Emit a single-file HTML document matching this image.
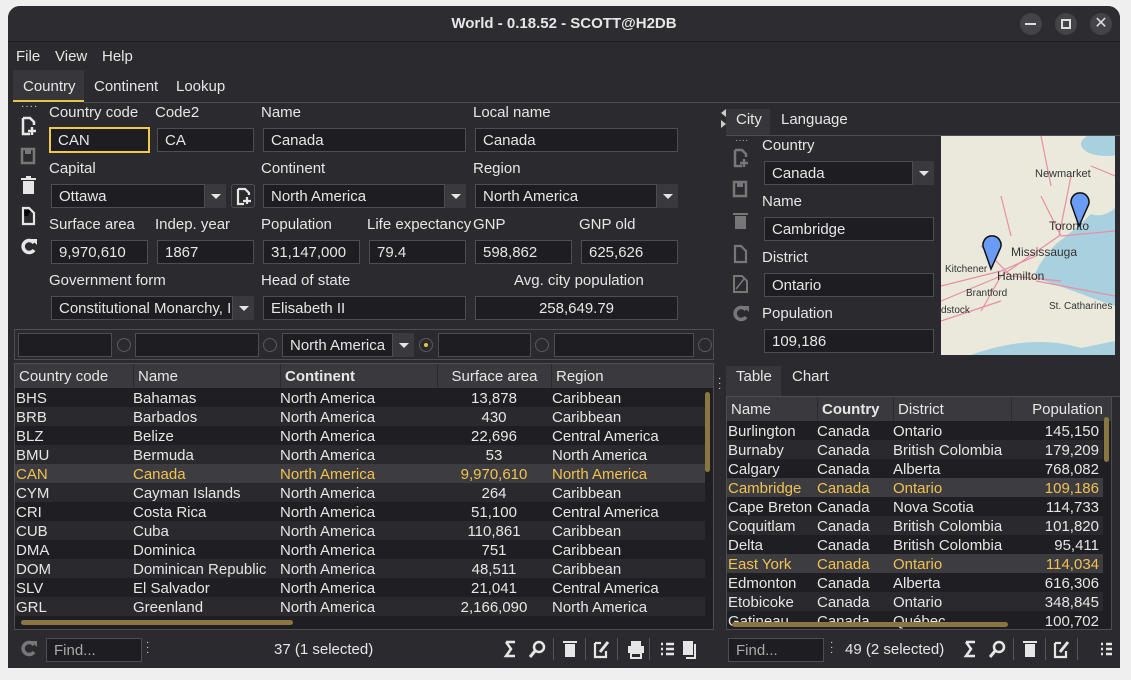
<!DOCTYPE html><html><head><style>
*{box-sizing:border-box;margin:0;padding:0}
body{width:1131px;height:680px;background:#efefef;font-family:"Liberation Sans",sans-serif;font-size:15px;color:#e6e6e6;position:relative;overflow:hidden}
.win{position:absolute;left:8px;top:6px;width:1112px;height:662px;background:#2b2a2e;border-radius:12px 12px 0 0;overflow:hidden}
.a{position:absolute;white-space:nowrap}
.inp{position:absolute;height:24px;background:#1e1d21;border:1px solid #4e4d52;padding:3px 7px;white-space:nowrap;overflow:hidden}
.dd{position:absolute;width:22px;height:24px;background:#3a393d;border-left:1px solid #4e4d52}
.dd:after{content:"";position:absolute;left:6px;top:10px;border:5px solid transparent;border-top:5px solid #e6e6e6}
.lbl{position:absolute;white-space:nowrap}
.row{position:absolute;height:19px;white-space:nowrap}
.row span{position:absolute;top:2px}
.rad{position:absolute;width:14px;height:14px;border:1px solid #5a595e;border-radius:50%}
.ico{position:absolute;color:#e6e6e6;font-size:15px}
</style></head><body>
<div class="win">
<div class="a" style="left:0;top:0;width:1112px;height:36px;background:#2d2c30;border-bottom:1px solid #1c1b1e"></div>
<div class="a" style="left:0;width:1112px;top:9px;text-align:center;font-weight:bold;font-size:15px">World - 0.18.52 - SCOTT@H2DB</div>
<div class="a" style="left:1012px;top:7px;width:22px;height:22px;border-radius:50%;background:#444347"></div>
<div class="a" style="left:1017px;top:17px;width:11px;height:2px;background:#ddd"></div>
<div class="a" style="left:1047px;top:7px;width:22px;height:22px;border-radius:50%;background:#444347"></div>
<div class="a" style="left:1053px;top:13px;width:10px;height:10px;border:2px solid #ddd"></div>
<div class="a" style="left:1082px;top:7px;width:22px;height:22px;border-radius:50%;background:#444347;text-align:center;line-height:22px;font-size:16px;color:#ddd">✕</div>
<div class="a" style="left:8px;top:42px">File</div>
<div class="a" style="left:47px;top:42px">View</div>
<div class="a" style="left:94px;top:42px">Help</div>
<div class="a" style="left:5px;top:64px;width:71px;height:32px;background:#37363a;border-bottom:2px solid #e8c34a"></div>
<div class="a" style="left:15px;top:72px">Country</div>
<div class="a" style="left:86px;top:72px">Continent</div>
<div class="a" style="left:168px;top:72px">Lookup</div>
<div class="a" style="left:76px;top:96px;width:1036px;height:1px;background:#4e4d52"></div>
<div class="a" style="left:13px;top:95px;font-size:10px;letter-spacing:1px">····</div>
<svg class="a" style="left:12px;top:110px" width="18" height="100" viewBox="0 0 18 100">
<path d="M3 2 H10 L14 6 V9 M3 2 V18 H10" stroke="#e6e6e6" stroke-width="2.5" fill="none"/><path d="M12 11 V19 M8 15 H16" stroke="#e6e6e6" stroke-width="2.5"/>
<path d="M2 33 H14 V47 H2 Z" fill="none" stroke="#777" stroke-width="2.5"/><rect x="5" y="33" width="6" height="5" fill="#777"/>
<rect x="3" y="65" width="11" height="13" fill="#e6e6e6"/><rect x="1" y="62" width="15" height="2" fill="#e6e6e6"/><rect x="6" y="60" width="5" height="2" fill="#e6e6e6"/>
<path d="M3 108 V94 H10 L13 91" stroke="none"/>
</svg>
<svg class="a" style="left:12px;top:200px" width="18" height="60"><path d="M3 2 H9 L14 7 V18 H3 Z" fill="none" stroke="#e6e6e6" stroke-width="2.2"/><path d="M14 37 A6 6 0 1 0 14 44" stroke="#e6e6e6" stroke-width="3.5" fill="none"/><path d="M11 33 L17 33 L17 39Z" fill="#e6e6e6"/></svg>
<div class="lbl" style="left:41px;top:98px">Country code</div>
<div class="lbl" style="left:147px;top:98px">Code2</div>
<div class="lbl" style="left:253px;top:98px">Name</div>
<div class="lbl" style="left:465px;top:98px">Local name</div>
<div class="inp" style="left:41px;top:121px;width:101px;height:26px;border:2px solid #f2c94c">CAN</div>
<div class="inp" style="left:149px;top:122px;width:97px">CA</div>
<div class="inp" style="left:255px;top:122px;width:203px">Canada</div>
<div class="inp" style="left:467px;top:122px;width:203px">Canada</div>
<div class="lbl" style="left:41px;top:154px">Capital</div>
<div class="lbl" style="left:253px;top:154px">Continent</div>
<div class="lbl" style="left:465px;top:154px">Region</div>
<div class="inp" style="left:43px;top:178px;width:175px">Ottawa</div><div class="dd" style="left:196px;top:178px"></div>
<div class="a" style="left:223px;top:178px;width:24px;height:24px;border:1px solid #4e4d52;border-radius:3px"><svg width="22" height="22"><path d="M6 4 H13 L17 8 V10 M6 4 V19 H12" stroke="#e6e6e6" stroke-width="2.2" fill="none"/><path d="M15 12 V19 M11 16 H19" stroke="#e6e6e6" stroke-width="2.2"/></svg></div>
<div class="inp" style="left:255px;top:178px;width:203px">North America</div><div class="dd" style="left:436px;top:178px"></div>
<div class="inp" style="left:467px;top:178px;width:203px">North America</div><div class="dd" style="left:648px;top:178px"></div>
<div class="lbl" style="left:41px;top:210px">Surface area</div>
<div class="lbl" style="left:147px;top:210px">Indep. year</div>
<div class="lbl" style="left:253px;top:210px">Population</div>
<div class="lbl" style="left:359px;top:210px">Life expectancy</div>
<div class="lbl" style="left:465px;top:210px">GNP</div>
<div class="lbl" style="left:571px;top:210px">GNP old</div>
<div class="inp" style="left:43px;top:234px;width:97px">9,970,610</div>
<div class="inp" style="left:149px;top:234px;width:97px">1867</div>
<div class="inp" style="left:255px;top:234px;width:97px">31,147,000</div>
<div class="inp" style="left:361px;top:234px;width:97px">79.4</div>
<div class="inp" style="left:467px;top:234px;width:97px">598,862</div>
<div class="inp" style="left:573px;top:234px;width:97px">625,626</div>
<div class="lbl" style="left:41px;top:266px">Government form</div>
<div class="lbl" style="left:253px;top:266px">Head of state</div>
<div class="lbl" style="left:506px;top:266px">Avg. city population</div>
<div class="inp" style="left:43px;top:290px;width:203px">Constitutional Monarchy, I</div><div class="dd" style="left:224px;top:290px"></div>
<div class="inp" style="left:255px;top:290px;width:203px">Elisabeth II</div>
<div class="inp" style="left:467px;top:290px;width:203px;text-align:center">258,649.79</div>
<div class="a" style="left:6px;top:323px;width:700px;height:31px;border:1px solid #4e4d52"></div>
<div class="inp" style="left:10px;top:327px;width:94px"></div><div class="rad" style="left:109px;top:332px"></div>
<div class="inp" style="left:127px;top:327px;width:124px"></div><div class="rad" style="left:255px;top:332px"></div>
<div class="inp" style="left:274px;top:327px;width:132px">North America</div><div class="dd" style="left:384px;top:327px"></div>
<div class="rad" style="left:411px;top:332px"></div><div class="a" style="left:416px;top:337px;width:4px;height:4px;border-radius:50%;background:#e8c34a"></div>
<div class="inp" style="left:430px;top:327px;width:93px"></div><div class="rad" style="left:527px;top:332px"></div>
<div class="inp" style="left:546px;top:327px;width:140px"></div><div class="rad" style="left:690px;top:332px"></div>
<div class="a" style="left:6px;top:357px;width:700px;height:267px;border:1px solid #4e4d52;overflow:hidden;background:#1f1e22">
 <div class="a" style="left:0;top:0;width:700px;height:24px;background:#3a393d"></div>
 <div class="a" style="left:4px;top:4px">Country code</div>
 <div class="a" style="left:118px;top:0;height:24px;border-left:1px solid #2b2a2e;padding:4px 4px">Name</div>
 <div class="a" style="left:265px;top:0;height:24px;border-left:1px solid #2b2a2e;padding:4px 4px;font-weight:bold">Continent</div>
 <div class="a" style="left:422px;top:0;width:114px;height:24px;border-left:1px solid #2b2a2e;padding:4px 0;text-align:center">Surface area</div>
 <div class="a" style="left:536px;top:0;height:24px;border-left:1px solid #2b2a2e;padding:4px 4px">Region</div>
 <div id="lt"></div>
 <div class="a" style="left:6px;top:256px;width:272px;height:5px;border-radius:3px;background:#8a7640"></div>
 <div class="a" style="left:690px;top:28px;width:5px;height:80px;border-radius:3px;background:#8a7640"></div>
</div>
<div class="a" style="left:709px;top:103px;border:4px solid transparent;border-right:5px solid #ccc"></div>
<div class="a" style="left:713px;top:114px;border:4px solid transparent;border-left:5px solid #ccc"></div>
<div class="a" style="left:718px;top:103px;width:44px;height:26px;background:#37363a"></div>
<div class="a" style="left:728px;top:105px">City</div>
<div class="a" style="left:773px;top:105px">Language</div>
<div class="a" style="left:718px;top:129px;width:394px;height:1px;background:#4e4d52"></div>
<div class="a" style="left:727px;top:129px;font-size:10px;color:#aaa">····</div>
<svg class="a" style="left:724px;top:140px" width="18" height="180" viewBox="0 0 18 180">
<path d="M3 4 H10 L14 8 V11 M3 4 V20 H10" stroke="#777" stroke-width="2.5" fill="none"/><path d="M12 13 V21 M8 17 H16" stroke="#777" stroke-width="2.5"/>
<path d="M2 36 H14 V50 H2 Z" fill="none" stroke="#777" stroke-width="2.5"/><rect x="5" y="36" width="6" height="5" fill="#777"/>
<rect x="3" y="70" width="11" height="13" fill="#777"/><rect x="1" y="67" width="15" height="2" fill="#777"/>
<path d="M3 100 H9 L14 105 V116 H3 Z" fill="none" stroke="#777" stroke-width="2.2"/>
<path d="M2 130 H10 L15 135 V146 H2 Z" fill="none" stroke="#777" stroke-width="2"/><path d="M4 143 L12 133" stroke="#777" stroke-width="1.5"/>
<path d="M14 164 A6 6 0 1 0 14 171" stroke="#777" stroke-width="3.5" fill="none"/><path d="M11 160 L17 160 L17 166Z" fill="#777"/>
</svg>
<div class="lbl" style="left:754px;top:131px">Country</div>
<div class="inp" style="left:756px;top:155px;width:170px">Canada</div><div class="dd" style="left:904px;top:155px"></div>
<div class="lbl" style="left:754px;top:187px">Name</div>
<div class="inp" style="left:756px;top:211px;width:170px">Cambridge</div>
<div class="lbl" style="left:754px;top:243px">District</div>
<div class="inp" style="left:756px;top:267px;width:170px">Ontario</div>
<div class="lbl" style="left:754px;top:299px">Population</div>
<div class="inp" style="left:756px;top:323px;width:170px">109,186</div>
<svg class="a" style="left:933px;top:130px" width="174" height="219" viewBox="0 0 174 219">
<rect width="174" height="219" fill="#ebe8dc"/>
<ellipse cx="165" cy="8" rx="25" ry="12" fill="#a9d0de"/>
<path d="M150 78 C160 82 170 76 174 72 L174 170 C150 162 120 150 95 142 C92 136 102 122 115 108 C128 98 140 88 150 78Z" fill="#a9d0de"/>
<path d="M30 219 C60 208 100 200 140 212 L174 205 L174 219Z" fill="#a9d0de"/>
<path d="M130 40 L118 100 L60 140 L0 165 M100 60 L120 100 L174 95 M40 110 L70 140 L120 145 M0 150 L60 135 L95 120 M60 140 L40 175 M0 185 L60 165 M100 0 L110 50 M60 60 L70 100 M95 145 L174 160 M150 30 L174 40" stroke="#e88ea5" stroke-width="1.2" fill="none"/>
<text x="94" y="41" font-size="11" fill="#333" font-family="Liberation Sans">Newmarket</text>
<text x="108" y="94" font-size="12" fill="#333" font-family="Liberation Sans">Toronto</text>
<text x="70" y="120" font-size="12" fill="#333" font-family="Liberation Sans">Mississauga</text>
<text x="56" y="144" font-size="12" fill="#333" font-family="Liberation Sans">Hamilton</text>
<text x="4" y="136" font-size="10" fill="#333" font-family="Liberation Sans">Kitchener</text>
<text x="25" y="160" font-size="10" fill="#333" font-family="Liberation Sans">Brantford</text>
<text x="0" y="177" font-size="10" fill="#333" font-family="Liberation Sans">dstock</text>
<text x="108" y="173" font-size="10" fill="#333" font-family="Liberation Sans">St. Catharines</text>
<path d="M138 90 L131 70 A9 9 0 1 1 147 70 Z" fill="#6b9cf5" stroke="#111" stroke-width="1.5"/>
<path d="M50 133 L43 113 A9 9 0 1 1 59 113 Z" fill="#6b9cf5" stroke="#111" stroke-width="1.5"/>
</svg>
<div class="a" style="left:718px;top:360px;width:55px;height:30px;background:#37363a"></div>
<div class="a" style="left:728px;top:362px">Table</div>
<div class="a" style="left:784px;top:362px">Chart</div>
<div class="a" style="left:718px;top:390px;width:394px;height:1px;background:#4e4d52"></div>
<div class="a" style="left:710px;top:370px;font-size:10px;line-height:5px">·<br>·<br>·</div>
<div class="a" style="left:718px;top:390px;width:386px;height:234px;border:1px solid #4e4d52;overflow:hidden;background:#1f1e22">
 <div class="a" style="left:0;top:0;width:386px;height:24px;background:#3a393d"></div>
 <div class="a" style="left:4px;top:4px">Name</div>
 <div class="a" style="left:90px;top:0;height:24px;border-left:1px solid #2b2a2e;padding:4px 4px;font-weight:bold">Country</div>
 <div class="a" style="left:166px;top:0;height:24px;border-left:1px solid #2b2a2e;padding:4px 4px">District</div>
 <div class="a" style="left:284px;top:0;width:92px;height:24px;border-left:1px solid #2b2a2e;padding:4px 0;text-align:right">Population</div>
 <div id="rt"></div>
 <div class="a" style="left:5px;top:225px;width:276px;height:5px;border-radius:3px;background:#8a7640"></div>
 <div class="a" style="left:377px;top:20px;width:5px;height:45px;border-radius:3px;background:#8a7640"></div>
</div>
<svg class="a" style="left:12px;top:634px" width="18" height="18"><path d="M14 5 A6 6 0 1 0 14 12" stroke="#777" stroke-width="3.5" fill="none"/><path d="M11 1 L17 1 L17 7Z" fill="#777"/></svg>
<div class="inp" style="left:38px;top:632px;width:96px;height:24px;color:#aaa">Find...</div>
<div class="a" style="left:138px;top:634px;font-size:10px;line-height:5px">·<br>·<br>·</div>
<div class="a" style="left:266px;top:635px">37 (1 selected)</div>
<svg class="a" style="left:494px;top:632px" width="200" height="22" viewBox="0 0 200 22">
<path d="M4 4 H13 M4 4 L9 11 L4 18 H13" stroke="#e6e6e6" stroke-width="2.5" fill="none"/>
<circle cx="37" cy="9" r="5" stroke="#e6e6e6" stroke-width="2.5" fill="none"/><path d="M33 13 L28 19" stroke="#e6e6e6" stroke-width="3"/>
<rect x="51" y="0" width="1" height="22" fill="#555"/>
<rect x="63" y="6" width="10" height="13" fill="#e6e6e6"/><rect x="61" y="3" width="14" height="2" fill="#e6e6e6"/>
<rect x="83" y="0" width="1" height="22" fill="#555"/>
<path d="M93 5 H99 M93 5 V19 H104 V13" stroke="#e6e6e6" stroke-width="2.2" fill="none"/><path d="M98 14 L106 4" stroke="#e6e6e6" stroke-width="3"/>
<rect x="115" y="0" width="1" height="22" fill="#555"/>
<rect x="126" y="8" width="16" height="7" fill="#e6e6e6"/><rect x="129" y="3" width="10" height="5" fill="#e6e6e6"/><rect x="129" y="15" width="10" height="5" fill="none" stroke="#e6e6e6" stroke-width="2"/>
<rect x="147" y="0" width="1" height="22" fill="#555"/>
<path d="M159 6 H161 M164 6 H172 M159 11 H161 M164 11 H172 M159 16 H161 M164 16 H172" stroke="#e6e6e6" stroke-width="2.5"/>
<rect x="181" y="3" width="10" height="14" fill="#e6e6e6"/><path d="M193 6 V20 H184" stroke="#e6e6e6" stroke-width="2" fill="none"/>
</svg>
<div class="inp" style="left:720px;top:632px;width:96px;height:24px;color:#aaa">Find...</div>
<div class="a" style="left:822px;top:634px;font-size:10px;line-height:5px">·<br>·<br>·</div>
<div class="a" style="left:837px;top:635px">49 (2 selected)</div>
<svg class="a" style="left:954px;top:632px" width="150" height="22" viewBox="0 0 150 22">
<path d="M4 4 H13 M4 4 L9 11 L4 18 H13" stroke="#e6e6e6" stroke-width="2.5" fill="none"/>
<circle cx="37" cy="9" r="5" stroke="#e6e6e6" stroke-width="2.5" fill="none"/><path d="M33 13 L28 19" stroke="#e6e6e6" stroke-width="3"/>
<rect x="51" y="0" width="1" height="22" fill="#555"/>
<rect x="63" y="6" width="10" height="13" fill="#e6e6e6"/><rect x="61" y="3" width="14" height="2" fill="#e6e6e6"/>
<rect x="83" y="0" width="1" height="22" fill="#555"/>
<path d="M93 5 H99 M93 5 V19 H104 V13" stroke="#e6e6e6" stroke-width="2.2" fill="none"/><path d="M98 14 L106 4" stroke="#e6e6e6" stroke-width="3"/>
<rect x="115" y="0" width="1" height="22" fill="#555"/>
<path d="M139 6 H141 M144 6 H152 M139 11 H141 M144 11 H152 M139 16 H141 M144 16 H152" stroke="#e6e6e6" stroke-width="2.5"/>
</svg>
</div>
<script>
var L=[["BHS","Bahamas","North America","13,878","Caribbean"],["BRB","Barbados","North America","430","Caribbean"],["BLZ","Belize","North America","22,696","Central America"],["BMU","Bermuda","North America","53","North America"],["CAN","Canada","North America","9,970,610","North America"],["CYM","Cayman Islands","North America","264","Caribbean"],["CRI","Costa Rica","North America","51,100","Central America"],["CUB","Cuba","North America","110,861","Caribbean"],["DMA","Dominica","North America","751","Caribbean"],["DOM","Dominican Republic","North America","48,511","Caribbean"],["SLV","El Salvador","North America","21,041","Central America"],["GRL","Greenland","North America","2,166,090","North America"]];
var h="";L.forEach(function(r,i){var sel=i==4;var bg=sel?"#3d3c40":(i%2?"#2a292d":"#1f1e22");var c=sel?"#f0c350":"#e6e6e6";
h+='<div class="row" style="left:0;top:'+(24+i*19)+'px;width:690px;background:'+bg+';color:'+c+'"><span style="left:1px">'+r[0]+'</span><span style="left:118px">'+r[1]+'</span><span style="left:265px">'+r[2]+'</span><span style="left:422px;width:114px;text-align:center">'+r[3]+'</span><span style="left:537px">'+r[4]+'</span></div>';});
document.getElementById("lt").outerHTML=h;
var R=[["Burlington","Canada","Ontario","145,150"],["Burnaby","Canada","British Colombia","179,209"],["Calgary","Canada","Alberta","768,082"],["Cambridge","Canada","Ontario","109,186"],["Cape Breton","Canada","Nova Scotia","114,733"],["Coquitlam","Canada","British Colombia","101,820"],["Delta","Canada","British Colombia","95,411"],["East York","Canada","Ontario","114,034"],["Edmonton","Canada","Alberta","616,306"],["Etobicoke","Canada","Ontario","348,845"],["Gatineau","Canada","Québec","100,702"]];
h="";R.forEach(function(r,i){var sel=i==3||i==7;var bg=sel?"#3d3c40":(i%2?"#2a292d":"#1f1e22");var c=sel?"#f0c350":"#e6e6e6";
h+='<div class="row" style="left:0;top:'+(24+i*19)+'px;width:376px;background:'+bg+';color:'+c+'"><span style="left:1px">'+r[0]+'</span><span style="left:90px">'+r[1]+'</span><span style="left:166px">'+r[2]+'</span><span style="left:284px;width:88px;text-align:right">'+r[3]+'</span></div>';});
document.getElementById("rt").outerHTML=h;
</script>
</body></html>
